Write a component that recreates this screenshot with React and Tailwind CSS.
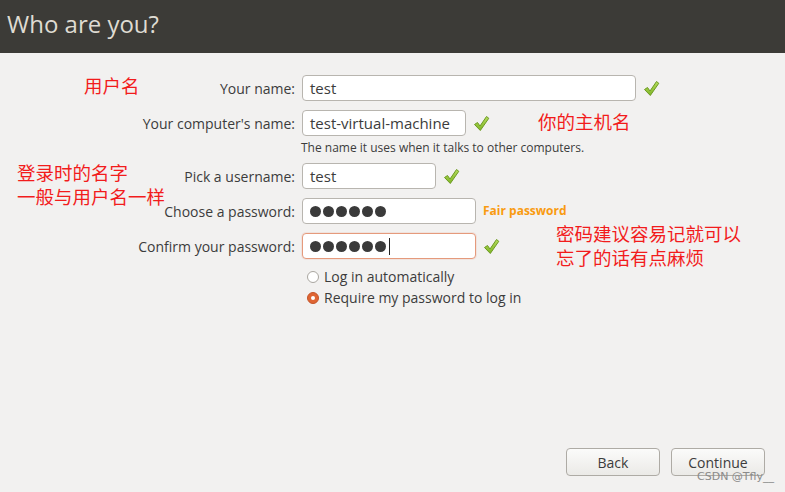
import React from 'react';

const Check = () => (
  <svg width="17" height="17" viewBox="0 0 17 17" className="shrink-0">
    <defs>
      <linearGradient id="ck" x1="0" y1="0" x2="0" y2="1">
        <stop offset="0" stopColor="#b5dc5c" />
        <stop offset="1" stopColor="#7fb525" />
      </linearGradient>
    </defs>
    <path
      d="M1.5 9.5 L4.5 7.5 L7 11 L13.5 1.5 L15.8 3.3 L7.3 15.5 Z"
      fill="url(#ck)"
      stroke="#6c9a22"
      strokeWidth="1"
      strokeLinejoin="round"
    />
  </svg>
);

const Field = ({ width, children, active }) => (
  <div
    className={`h-[26px] ${width} rounded-[4px] border bg-white px-[7px] flex items-center text-[15px] text-[#3c3c3c] ${
      active ? 'border-[#e59a7c] shadow-[0_0_0_1px_rgba(230,150,120,0.15)]' : 'border-[#b8b5af]'
    }`}
  >
    {children}
  </div>
);

const Dots = ({ cursor }) => (
  <span className="flex items-center gap-[2px]">
    {[0, 1, 2, 3, 4, 5].map((i) => (
      <span key={i} className="w-[11px] h-[11px] rounded-full bg-[#3a3a3a]" />
    ))}
    {cursor && <span className="ml-[1px] w-px h-[17px] bg-[#222]" />}
  </span>
);

const Label = ({ children }) => (
  <div className="h-[26px] flex items-center justify-end pr-[7px] text-[14px] text-[#3c3c3c]">{children}</div>
);

const Radio = ({ checked, children }) => (
  <div className="flex items-center gap-[5px] text-[14px] text-[#3c3c3c] h-[21px]">
    {checked ? (
      <span className="w-[12px] h-[12px] rounded-full bg-[#df6533] border border-[#c4552a] flex items-center justify-center">
        <span className="w-[4px] h-[4px] rounded-full bg-white" />
      </span>
    ) : (
      <span className="w-[12px] h-[12px] rounded-full bg-white border border-[#a9a6a0]" />
    )}
    <span>{children}</span>
  </div>
);

const Button = ({ children }) => (
  <button className="w-[94px] h-[28px] rounded-[4px] border border-[#aeaba5] bg-gradient-to-b from-[#fbfbfa] to-[#ebeae7] text-[14px] text-[#3c3c3c]">
    {children}
  </button>
);

const App = () => {
  const zh = { fontFamily: '"Noto Sans CJK SC", sans-serif' };

  return (
    <div
      className="relative w-[785px] h-[492px] bg-[#f2f1f0] flex flex-col overflow-hidden"
      style={{ fontFamily: '"Open Sans", "Noto Sans", sans-serif' }}
    >
      <div className="h-[53px] bg-[#3c3b37] flex items-center px-[7px] pb-[6px]">
        <h1 className="text-[24px] text-[#dfdbd2]">Who are you?</h1>
      </div>

      <div className="flex-1 flex flex-col pt-[22px]">
        <div className="grid grid-cols-[302px_1fr] gap-y-[9px] items-center">
          <Label>Your name:</Label>
          <div className="flex items-center gap-[7px]">
            <Field width="w-[334px]">test</Field>
            <Check />
          </div>

          <Label>Your computer's name:</Label>
          <div className="flex items-center gap-[7px]">
            <Field width="w-[164px]">test-virtual-machine</Field>
            <Check />
          </div>
        </div>

        <div className="pl-[301px] pt-[3px] h-[27px] text-[12px] text-[#3c3c3c]">
          The name it uses when it talks to other computers.
        </div>

        <div className="grid grid-cols-[302px_1fr] gap-y-[9px] items-center">
          <Label>Pick a username:</Label>
          <div className="flex items-center gap-[7px]">
            <Field width="w-[134px]">test</Field>
            <Check />
          </div>

          <Label>Choose a password:</Label>
          <div className="flex items-center gap-[7px]">
            <Field width="w-[174px]">
              <Dots />
            </Field>
            <span className="text-[12px] font-bold text-[#f99b11]">Fair password</span>
          </div>

          <Label>Confirm your password:</Label>
          <div className="flex items-center gap-[7px]">
            <Field width="w-[174px]" active>
              <Dots cursor />
            </Field>
            <Check />
          </div>
        </div>

        <div className="pl-[307px] pt-[7px] flex flex-col">
          <Radio>Log in automatically</Radio>
          <Radio checked>Require my password to log in</Radio>
        </div>

        <div className="mt-auto flex justify-end gap-[11px] pr-[20px] pb-[16px]">
          <Button>Back</Button>
          <Button>Continue</Button>
        </div>
      </div>

      {/* red annotations */}
      <div className="absolute left-[84px] top-[73px] text-[18.5px] text-[#f21c1c] leading-[24px]" style={zh}>
        用户名
      </div>
      <div className="absolute left-[538px] top-[109px] text-[18.5px] text-[#f21c1c] leading-[24px]" style={zh}>
        你的主机名
      </div>
      <div className="absolute left-[17px] top-[160px] text-[18.5px] text-[#f21c1c] leading-[24px]" style={zh}>
        登录时的名字
        <br />
        一般与用户名一样
      </div>
      <div className="absolute left-[556px] top-[221px] text-[18.5px] text-[#f21c1c] leading-[24px]" style={zh}>
        密码建议容易记就可以
        <br />
        忘了的话有点麻烦
      </div>

      <div className="absolute left-[697px] top-[469px] text-[11px] text-[#8a8a8a]" style={{ fontFamily: '"DejaVu Sans", sans-serif' }}>
        CSDN @Tfly__
      </div>
    </div>
  );
};

export default App;
